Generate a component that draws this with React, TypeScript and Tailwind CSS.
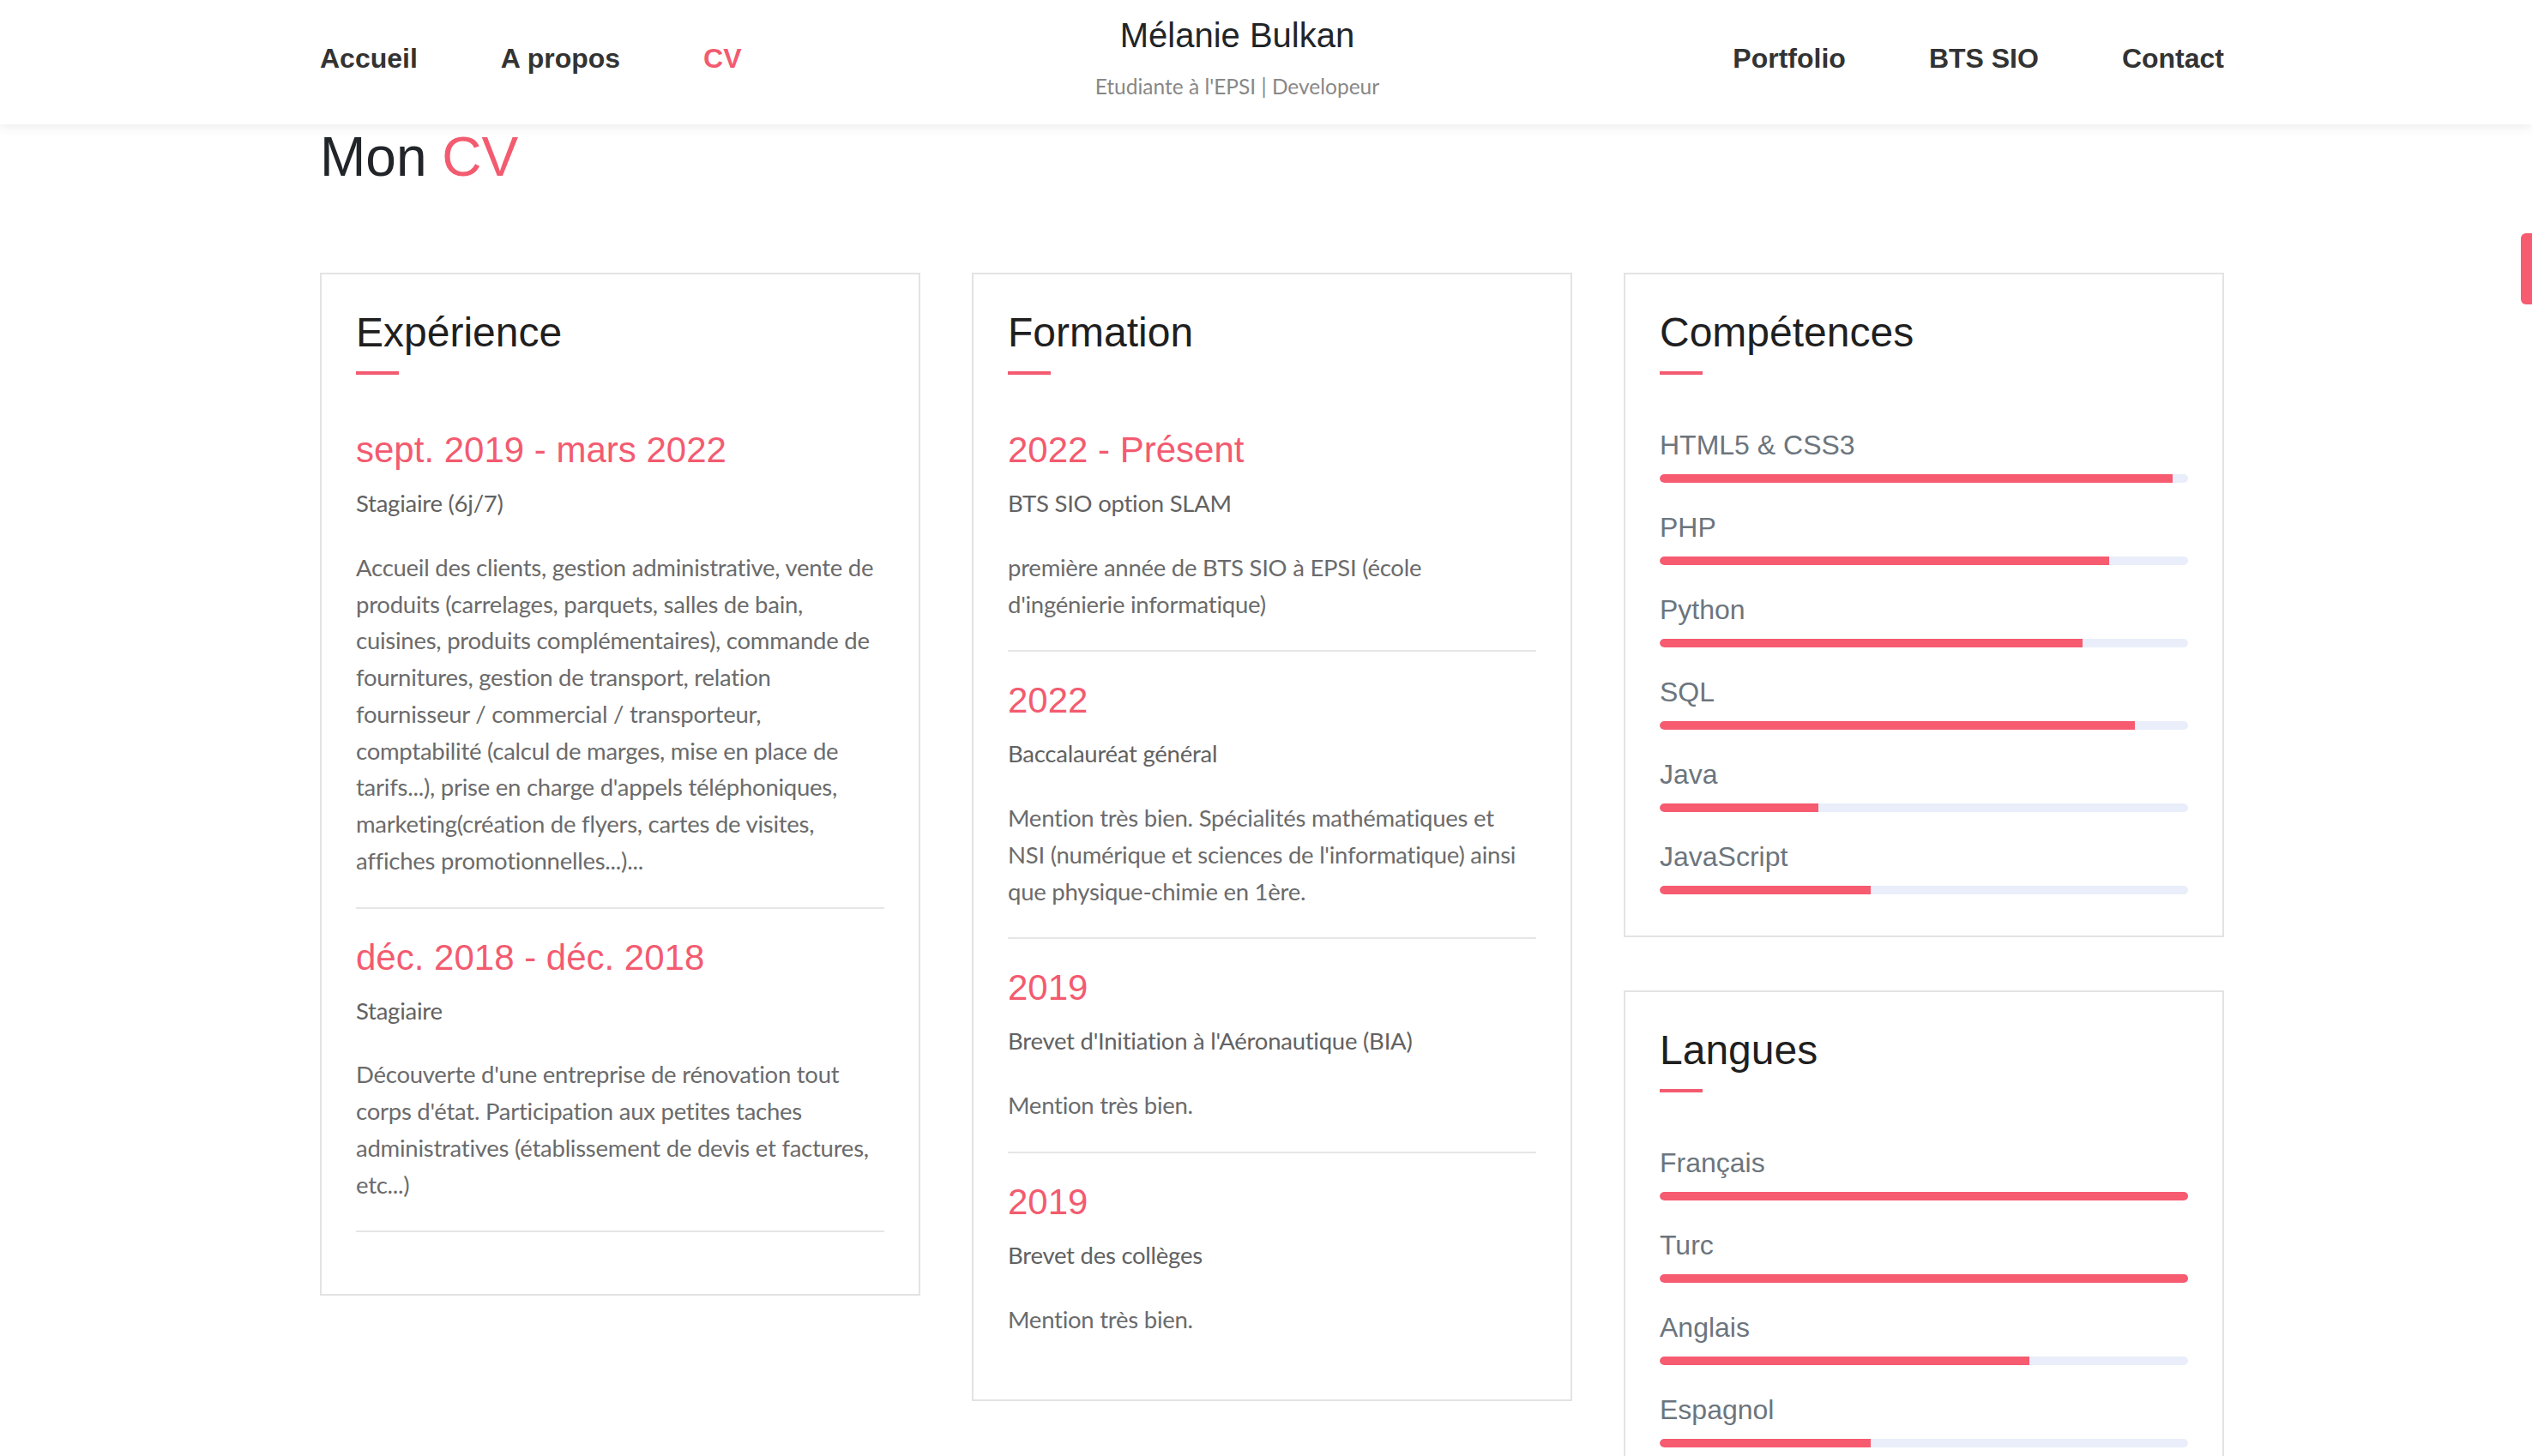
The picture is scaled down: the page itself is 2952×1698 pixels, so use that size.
import React from "react";

const PINK = "text-[#f35b70]";

type Entry = {
  date: string;
  title: string;
  lines: string[];
};

const experience: Entry[] = [
  {
    date: "sept. 2019 - mars 2022",
    title: "Stagiaire (6j/7)",
    lines: [
      "Accueil des clients, gestion administrative, vente de",
      "produits (carrelages, parquets, salles de bain,",
      "cuisines, produits complémentaires), commande de",
      "fournitures, gestion de transport, relation",
      "fournisseur / commercial / transporteur,",
      "comptabilité (calcul de marges, mise en place de",
      "tarifs...), prise en charge d'appels téléphoniques,",
      "marketing(création de flyers, cartes de visites,",
      "affiches promotionnelles...)...",
    ],
  },
  {
    date: "déc. 2018 - déc. 2018",
    title: "Stagiaire",
    lines: [
      "Découverte d'une entreprise de rénovation tout",
      "corps d'état. Participation aux petites taches",
      "administratives (établissement de devis et factures,",
      "etc...)",
    ],
  },
];

const formation: Entry[] = [
  {
    date: "2022 - Présent",
    title: "BTS SIO option SLAM",
    lines: ["première année de BTS SIO à EPSI (école", "d'ingénierie informatique)"],
  },
  {
    date: "2022",
    title: "Baccalauréat général",
    lines: [
      "Mention très bien. Spécialités mathématiques et",
      "NSI (numérique et sciences de l'informatique) ainsi",
      "que physique-chimie en 1ère.",
    ],
  },
  {
    date: "2019",
    title: "Brevet d'Initiation à l'Aéronautique (BIA)",
    lines: ["Mention très bien."],
  },
  {
    date: "2019",
    title: "Brevet des collèges",
    lines: ["Mention très bien."],
  },
];

const skills = [
  { name: "HTML5 & CSS3", value: 97 },
  { name: "PHP", value: 85 },
  { name: "Python", value: 80 },
  { name: "SQL", value: 90 },
  { name: "Java", value: 30 },
  { name: "JavaScript", value: 40 },
];

const languages = [
  { name: "Français", value: 100 },
  { name: "Turc", value: 100 },
  { name: "Anglais", value: 70 },
  { name: "Espagnol", value: 40 },
];

function CardTitle({ children }: { children: React.ReactNode }) {
  return (
    <>
      <h2 className="text-[48px] leading-[58px] text-[#1f1f1f] font-['Liberation_Sans',Arial,sans-serif]">
        {children}
      </h2>
      <div className="mt-[16px] mb-[63px] h-[4px] w-[50px] bg-[#f35b70]" />
    </>
  );
}

function Timeline({ entries, lastBorder }: { entries: Entry[]; lastBorder: boolean }) {
  return (
    <div>
      {entries.map((e, i) => {
        const last = i === entries.length - 1;
        return (
          <div
            key={i}
            className={
              last && !lastBorder
                ? "pb-[32px]"
                : "pb-[32px] mb-[32px] border-b-2 border-[#e6e6e6]"
            }
          >
            <h3 className={`text-[42px] leading-[50px] ${PINK} font-['Liberation_Sans',Arial,sans-serif]`}>
              {e.date}
            </h3>
            <p className="mt-[16px] text-[27.5px] tracking-[-0.25px] leading-[42.75px] text-[#626262]">
              {e.title}
            </p>
            <p className="mt-[32px] text-[27.5px] tracking-[-0.25px] leading-[42.75px] text-[#6b6b6b]">
              {e.lines.map((l, j) => (
                <span key={j} className="block whitespace-nowrap">
                  {l}
                </span>
              ))}
            </p>
          </div>
        );
      })}
    </div>
  );
}

function Bars({ items }: { items: { name: string; value: number }[] }) {
  return (
    <div className="flex flex-col gap-[33px] pb-[8px]">
      {items.map((s) => (
        <div key={s.name}>
          <div className="text-[32px] leading-[38px] text-[#6c757d] font-['Liberation_Sans',Arial,sans-serif]">
            {s.name}
          </div>
          <div className="mt-[15px] h-[10px] w-full rounded-full bg-[#e9eefa] overflow-hidden">
            <div className="h-full rounded-l-full bg-[#f65b70]" style={{ width: `${s.value}%` }} />
          </div>
        </div>
      ))}
    </div>
  );
}

function Card({ children }: { children: React.ReactNode }) {
  return <div className="border-2 border-[#e3e3e3] bg-white px-[40px] pt-[39px] pb-[40px]">{children}</div>;
}

export default function App() {
  const left = ["Accueil", "A propos", "CV"];
  const right = ["Portfolio", "BTS SIO", "Contact"];

  return (
    <div className="min-h-screen bg-white font-['Lato','Liberation_Sans',sans-serif]">
      <header className="relative z-10 bg-white shadow-[0_4px_12px_rgba(0,0,0,0.07)]">
        <div className="ml-[373px] w-[2220px] h-[145px] pb-[9px] flex items-center justify-between">
          <nav className="flex gap-[97px] text-[32px] font-bold text-[#333] font-['Liberation_Sans',Arial,sans-serif]">
            {left.map((l) => (
              <a key={l} className={l === "CV" ? PINK : ""}>
                {l}
              </a>
            ))}
          </nav>
          <div className="flex flex-col items-center">
            <div className="text-[40px] leading-[48px] text-[#212529] font-['Liberation_Sans',Arial,sans-serif]">
              Mélanie Bulkan
            </div>
            <div className="mt-[17px] text-[24.5px] leading-[37px] text-[#888]">
              Etudiante à l'EPSI | Developeur
            </div>
          </div>
          <nav className="flex gap-[97px] text-[32px] font-bold text-[#333] font-['Liberation_Sans',Arial,sans-serif]">
            {right.map((l) => (
              <a key={l}>{l}</a>
            ))}
          </nav>
        </div>
      </header>

      <main className="ml-[373px] w-[2220px] pb-[120px]">
        <h1 className="text-[64px] leading-[77px] text-[#212529] font-['Liberation_Sans',Arial,sans-serif]">
          Mon <span className={PINK}>CV</span>
        </h1>

        <div className="mt-[96px] grid grid-cols-3 gap-[60px] items-start">
          <Card>
            <CardTitle>Expérience</CardTitle>
            <Timeline entries={experience} lastBorder />
          </Card>
          <Card>
            <CardTitle>Formation</CardTitle>
            <Timeline entries={formation} lastBorder={false} />
          </Card>
          <div className="flex flex-col gap-[62px]">
            <Card>
              <CardTitle>Compétences</CardTitle>
              <Bars items={skills} />
            </Card>
            <Card>
              <CardTitle>Langues</CardTitle>
              <Bars items={languages} />
            </Card>
          </div>
        </div>
      </main>

      <div className="fixed right-0 top-[272px] h-[83px] w-[13px] rounded-l-[6px] bg-[#f75b70]" />
    </div>
  );
}
